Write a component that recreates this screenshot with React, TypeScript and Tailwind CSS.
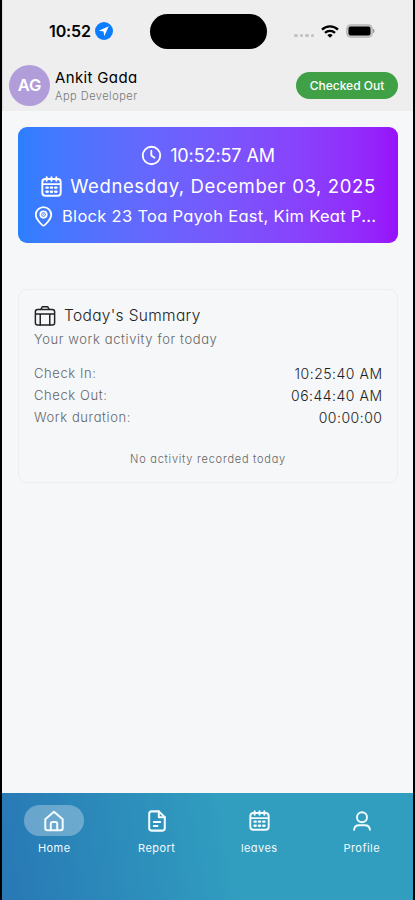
import type { ReactNode } from "react";

type IconProps = { className?: string };

const ClockIcon = ({ className }: IconProps) => (
  <svg viewBox="0 0 24 24" fill="none" stroke="currentColor" strokeWidth="2.1" strokeLinecap="round" strokeLinejoin="round" className={className}>
    <circle cx="12" cy="12" r="10" />
    <path d="M11.8 6.5V12l3.6 2.6" />
  </svg>
);

const CalendarIcon = ({ className }: IconProps) => (
  <svg viewBox="0 0 24 24" fill="none" stroke="currentColor" strokeWidth="2.2" strokeLinecap="round" strokeLinejoin="round" className={className}>
    <rect x="1.5" y="3.5" width="21" height="19" rx="3.5" />
    <path d="M6.5 1.4v4M12 1.4v4M17.5 1.4v4M2 9.3h20" />
    <path d="M6.2 13.4h1.6M11.2 13.4h1.6M16.2 13.4h1.6M6.2 18h1.6M11.2 18h1.6M16.2 18h1.6" strokeWidth="2.6" />
  </svg>
);

const PinIcon = ({ className }: IconProps) => (
  <svg viewBox="0 0 24 24" fill="none" stroke="currentColor" strokeWidth="2.1" strokeLinecap="round" strokeLinejoin="round" className={className}>
    <path d="M12 22.5c-1 0-8.8-7-8.8-12.5a8.8 8.8 0 0 1 17.6 0c0 5.5-7.8 12.5-8.8 12.5z" />
    <circle cx="12" cy="9.8" r="3.6" />
    <circle cx="12" cy="9.8" r="0.5" />
  </svg>
);

const BriefcaseIcon = ({ className }: IconProps) => (
  <svg viewBox="0 0 24 24" fill="none" stroke="currentColor" strokeWidth="1.6" strokeLinecap="round" strokeLinejoin="round" className={className}>
    <rect x="1.5" y="4.8" width="21" height="17" rx="2.5" />
    <path d="M7.5 4.8 9 2h6l1.5 2.8M2 9.8h20M6.8 9.8v11.9M17.2 9.8v11.9" />
  </svg>
);

const HomeIcon = ({ className }: IconProps) => (
  <svg viewBox="0 0 24 24" fill="none" stroke="currentColor" strokeWidth="2.2" strokeLinecap="round" strokeLinejoin="round" className={className}>
    <path d="M2.5 10.2 12 2l9.5 8.200V20a2 2 0 0 1-2 2h-15a2 2 0 0 1-2-2z" />
    <path d="M8.5 22v-7a2 2 0 0 1 2-2h3a2 2 0 0 1 2 2v7" />
  </svg>
);

const ReportIcon = ({ className }: IconProps) => (
  <svg viewBox="0 0 24 24" fill="none" stroke="currentColor" strokeWidth="2.2" strokeLinecap="round" strokeLinejoin="round" className={className}>
    <path d="M14 1.5H6A2.5 2.5 0 0 0 3.5 4v16A2.5 2.5 0 0 0 6 22.5h12a2.5 2.5 0 0 0 2.5-2.5V8z" />
    <path d="M14 1.5V8h6.5M8.5 13.2h7M8.5 17.5h4" />
  </svg>
);

const UserIcon = ({ className }: IconProps) => (
  <svg viewBox="0 0 24 24" fill="none" stroke="currentColor" strokeWidth="2.3" strokeLinecap="round" strokeLinejoin="round" className={className}>
    <circle cx="12" cy="7.5" r="6" />
    <path d="M2.5 22.5c.4-3.8 3-5.5 6-5.5h7c3 0 5.6 1.7 6 5.5" />
  </svg>
);

const StatusBar = () => (
  <div className="flex h-[62px] items-center pl-[46px]">
    <span className="w-[44px] text-[16px] font-semibold tracking-[-0.1px] text-black">10:52</span>
    <svg viewBox="0 0 18 18" className="ml-[2px] size-[18px]">
      <circle cx="9" cy="9" r="9" fill="#0a7cff" />
      <path d="M13.8 4.2 3.8 8.8l4.8.6.6 4.8z" fill="#fff" />
    </svg>
    <div className="ml-[37px] h-[35px] w-[117px] rounded-full bg-black" />
    <div className="mt-[9px] ml-[27px] flex gap-[2px]">
      {[0, 1, 2, 3].map((i) => (
        <span key={i} className="size-[3.5px] rounded-full bg-[#c0c0c0]" />
      ))}
    </div>
    <svg viewBox="0 0 18 13" className="ml-[7px] h-[13px] w-[18px]" fill="none" stroke="#000" strokeWidth="2.3">
      <path d="M1 4.6a11.5 11.5 0 0 1 16 0" />
      <path d="M4 7.9a7.2 7.2 0 0 1 10 0" />
      <path d="M9 12.8 6.3 10.2a4 4 0 0 1 5.4 0z" fill="#000" stroke="none" />
    </svg>
    <svg viewBox="0 0 29 14" className="ml-[7px] h-[14px] w-[29px]">
      <rect x="0.8" y="0.8" width="25.4" height="12.4" rx="4" fill="#c8c8c8" stroke="#b8b8b8" strokeWidth="1.3" />
      <rect x="2.5" y="2.5" width="22" height="9" rx="2" fill="#000" />
      <path d="M27 4.8c2 .6 2 3.8 0 4.4z" fill="#999" />
    </svg>
  </div>
);

const Header = () => (
  <div className="flex h-[49px] items-start justify-between pr-[15px] pl-[6px]">
    <div className="flex items-center">
      <div className="mt-[3px] flex size-[41px] items-center justify-center rounded-full bg-[#b29ddb] text-[16.5px] font-semibold text-white">
        AG
      </div>
      <div className="ml-[5px] pt-[4px] whitespace-nowrap">
        <div className="text-[15px] leading-[20px] tracking-[0.35px] text-black">Ankit Gada</div>
        <div className="text-[11px] leading-[17px] font-light tracking-[0.5px] text-[#777]">App Developer</div>
      </div>
    </div>
    <div className="mt-[10px] flex h-[27px] w-[102px] items-center justify-center rounded-full bg-[#3fa046] text-[12px] font-medium whitespace-nowrap text-white">
      Checked Out
    </div>
  </div>
);

const rows = [
  { label: "Check In:", value: "10:25:40 AM" },
  { label: "Check Out:", value: "06:44:40 AM" },
  { label: "Work duration:", value: "00:00:00" },
];

const tabs: { label: string; icon: ReactNode; active?: boolean }[] = [
  { label: "Home", icon: <HomeIcon className="size-[22px]" />, active: true },
  { label: "Report", icon: <ReportIcon className="size-[22px]" /> },
  { label: "leaves", icon: <CalendarIcon className="size-[21px]" /> },
  { label: "Profile", icon: <UserIcon className="size-[20px]" /> },
];

const App = () => {
  return (
    <div className="flex h-[900px] w-[415px] flex-col overflow-hidden border-x-2 border-black bg-[#f5f7f9] font-['Inter',sans-serif] [font-feature-settings:'cv11']">
      <header className="h-[111px] border-l border-[#ddd] bg-[#eeeeee]">
        <StatusBar />
        <Header />
      </header>

      <main className="flex-1 px-4 pt-4 pr-[15px]">
        <section className="h-[116px] rounded-[9px] bg-linear-to-r from-[#2b7fff] to-[#9810fa] pt-[13px] text-white">
          <div className="flex h-[31px] items-center justify-center gap-[8px]">
            <ClockIcon className="size-[21px]" />
            <span className="text-[18px] tracking-[-0.1px] whitespace-nowrap">10:52:57 AM</span>
          </div>
          <div className="flex h-[31px] items-center justify-center gap-[8px] pl-px">
            <CalendarIcon className="size-[21px]" />
            <span className="text-[18.5px] tracking-[0.62px] whitespace-nowrap">Wednesday, December 03, 2025</span>
          </div>
          <div className="flex h-[28px] items-center pl-[15px]">
            <PinIcon className="size-[21px]" />
            <span className="ml-[8px] text-[16.5px] tracking-[0.3px] whitespace-nowrap">Block 23 Toa Payoh East, Kim Keat P...</span>
          </div>
        </section>

        <section className="mt-[46px] h-[194px] rounded-[9px] border border-[#eceef0] px-[15px] pt-[14px]">
          <div className="flex h-[23px] items-center gap-[8px] text-[#222]">
            <BriefcaseIcon className="size-[22px]" />
            <h2 className="text-[15.5px] font-light tracking-[0.33px] whitespace-nowrap">Today's Summary</h2>
          </div>
          <p className="h-[23px] text-[13px] leading-[24px] font-light tracking-[0.6px] whitespace-nowrap text-[#666]">
            Your work activity for today
          </p>
          <div className="mt-[12px]">
            {rows.map((row) => (
              <div key={row.label} className="flex h-[22px] items-center justify-between">
                <span className="pt-px text-[13px] font-light tracking-[0.6px] whitespace-nowrap text-[#666]">{row.label}</span>
                <span className="-mr-[0.5px] text-[14px] font-light tracking-[0.5px] whitespace-nowrap text-[#222]">{row.value}</span>
              </div>
            ))}
          </div>
          <p className="mt-[21px] text-center text-[11px] leading-[20px] font-light tracking-[0.75px] text-[#666]">
            No activity recorded today
          </p>
        </section>
      </main>

      <nav className="flex h-[107px] bg-linear-80 from-[#2878b5] to-[#319dbf] to-55% pt-[12px] pl-px text-[#f3fbff]">
        {tabs.map((tab) => (
          <div key={tab.label} className="flex flex-1 flex-col items-center">
            <div
              className={
                tab.active
                  ? "flex h-[31px] w-[60px] items-center justify-center rounded-full bg-white/30"
                  : "flex h-[31px] w-[60px] items-center justify-center"
              }
            >
              {tab.icon}
            </div>
            <span className="mt-[3px] text-[11px] leading-[18px] tracking-[0.45px]">{tab.label}</span>
          </div>
        ))}
      </nav>
    </div>
  );
};

export default App;
